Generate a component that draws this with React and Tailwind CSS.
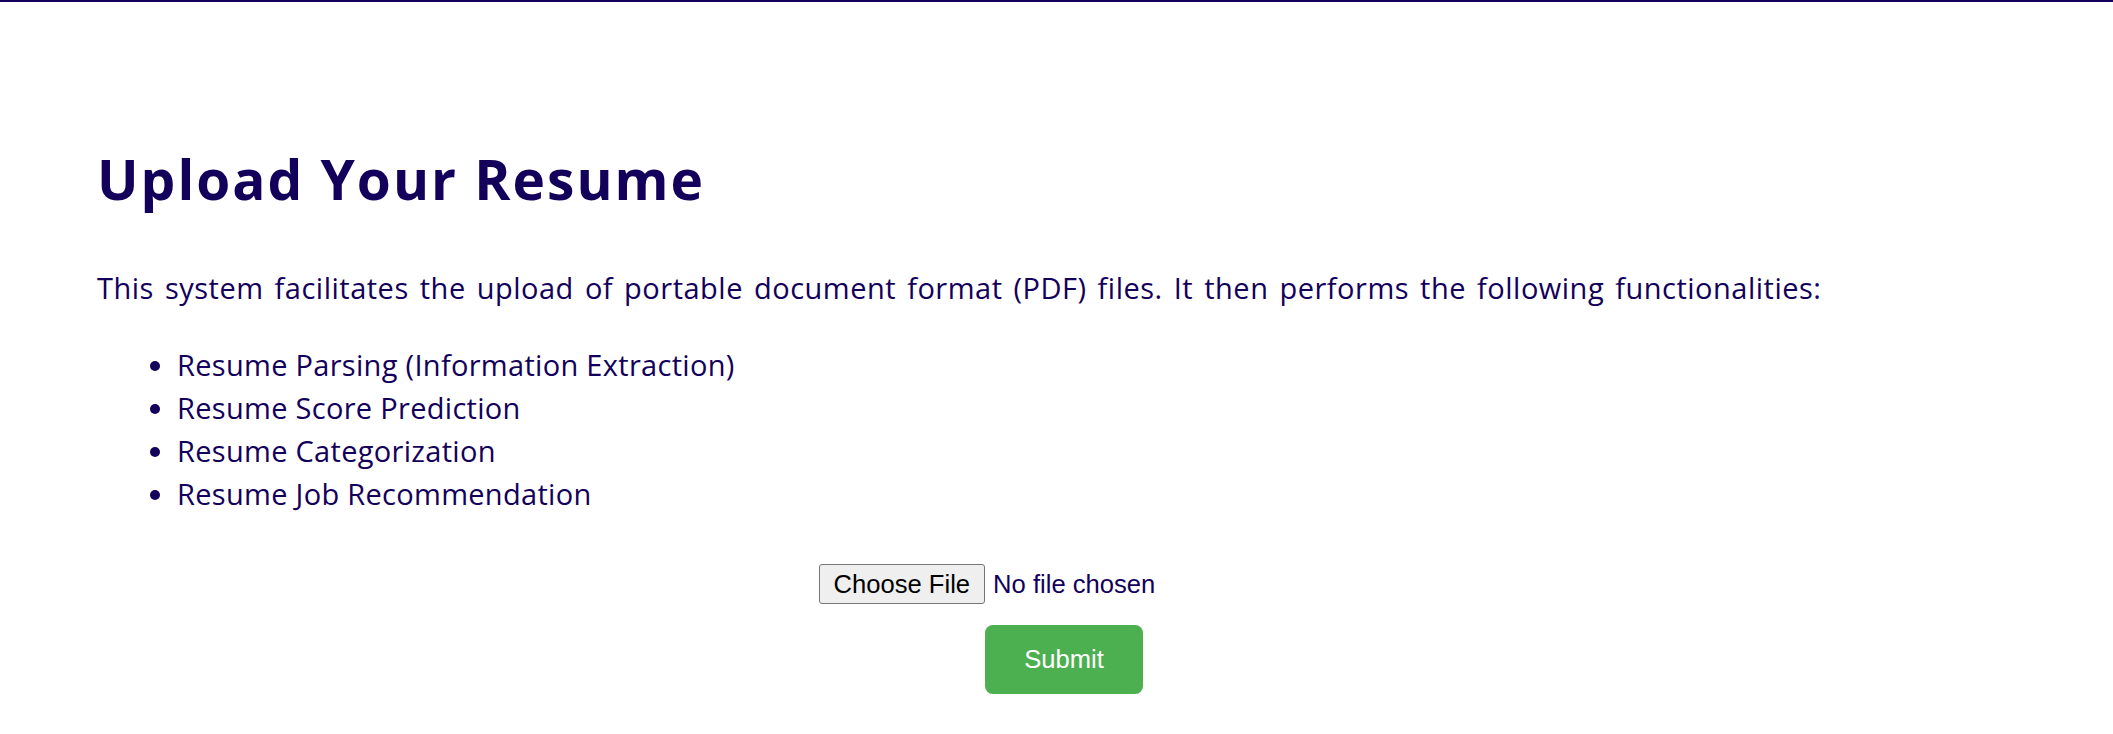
import React from 'react';

const features = [
  'Resume Parsing (Information Extraction)',
  'Resume Score Prediction',
  'Resume Categorization',
  'Resume Job Recommendation',
];

export default function App() {
  return (
    <div className="min-h-screen bg-white border-t-2 border-[#13005a] text-[#13005a] font-['Open_Sans','Noto_Sans',sans-serif]">
      <div className="px-[97px] pt-[145px]">
        <h1 className="text-[55px] leading-[64px] font-bold tracking-[2px]">Upload Your Resume</h1>

        <p className="mt-[57px] text-[29px] leading-[40px] tracking-[0.5px] [word-spacing:3px]">
          This system facilitates the upload of portable document format (PDF) files. It then performs the following functionalities:
        </p>

        <ul className="mt-[35px] list-disc pl-[80px] text-[29px] leading-[43px] tracking-[0.3px]">
          {features.map((f) => (
            <li key={f}>{f}</li>
          ))}
        </ul>

        {/* upload form */}
        <form className="mt-[49px] flex flex-col items-center font-['Liberation_Sans',Arial,sans-serif] text-[25.6px]">
          <label className="w-[476px] flex items-center gap-[8px] cursor-pointer">
            <input type="file" accept="application/pdf" className="hidden" />
            <span className="h-[40px] px-[14px] flex items-center justify-center bg-[#efefef] border border-[#767676] rounded-[3px] text-black">
              Choose File
            </span>
            <span className="text-[#13005a]">No file chosen</span>
          </label>
          <button
            type="button"
            className="mt-[21px] ml-[15px] h-[69px] w-[158px] rounded-[8px] bg-[#4caf50] text-white"
          >
            Submit
          </button>
        </form>
      </div>
    </div>
  );
}
